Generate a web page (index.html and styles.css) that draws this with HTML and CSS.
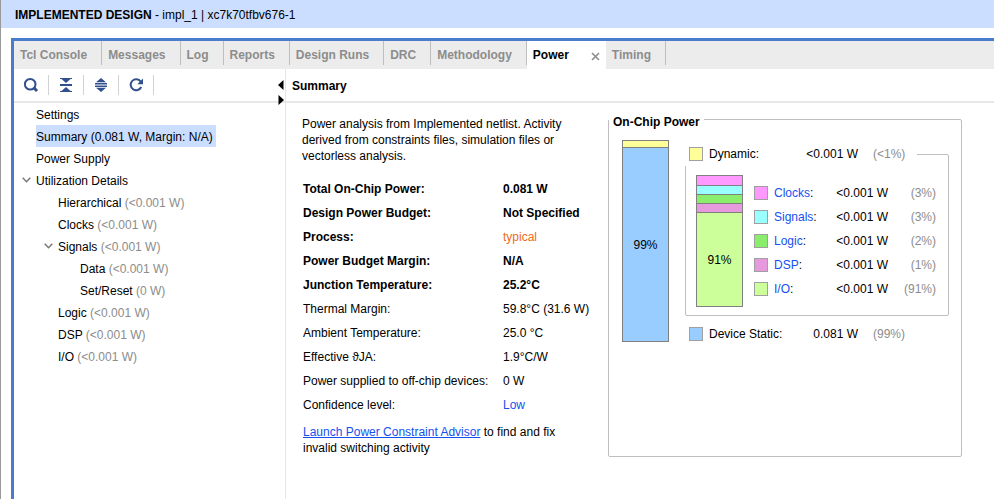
FILE: index.html
```html
<!DOCTYPE html>
<html lang="en">
<head>
<meta charset="utf-8">
<title>Implemented Design - Power</title>
<link rel="stylesheet" href="styles.css">
</head>
<body>
<header class="design-bar"><h1>IMPLEMENTED DESIGN</h1><span>&nbsp;- impl_1 | xc7k70tfbv676-1</span></header>
<div class="panel">
  <div class="tabs" role="tablist">
    <button class="tab" role="tab">Tcl Console</button>
    <button class="tab" role="tab">Messages</button>
    <button class="tab" role="tab">Log</button>
    <button class="tab" role="tab">Reports</button>
    <button class="tab" role="tab">Design Runs</button>
    <button class="tab" role="tab">DRC</button>
    <button class="tab" role="tab">Methodology</button>
    <div class="tab-active">
      <button class="tab-label" role="tab" aria-selected="true">Power</button>
      <button class="tab-close" aria-label="Close Power"><svg width="9" height="9" viewBox="0 0 9 9"><path d="M1 1l7 7M8 1l-7 7" stroke="#8c8c8c" stroke-width="1.6" fill="none"/></svg></button>
    </div>
    <button class="tab" role="tab">Timing</button>
  </div>
  <div class="workspace">
    <aside class="sidebar">
      <div class="toolbar">
        <button class="tool" aria-label="Search"><svg width="16" height="16" viewBox="0 0 16 16"><circle cx="7.200" cy="7.200" r="5.300" fill="none" stroke="#32508c" stroke-width="2"/><path d="M10.800 10.800l3.200 3.200" stroke="#32508c" stroke-width="3"/></svg></button>
        <button class="tool" aria-label="Collapse all"><svg width="16" height="16" viewBox="0 0 16 16" fill="#32508c"><path d="M2 1h12v1h-1.500L8 6 3.500 2H2zM2 7h12v2H2zM2 15h12v-1h-1.500L8 10l-4.500 4H2z"/></svg></button>
        <button class="tool" aria-label="Expand all"><svg width="16" height="16" viewBox="0 0 16 16" fill="#32508c"><path d="M8 1l5 4.300H3zM2 6h12v1.500H2zM2 8.500h12V10H2zM3 10.700h10L8 15z"/></svg></button>
        <button class="tool" aria-label="Refresh"><svg width="16" height="16" viewBox="0 0 16 16"><path d="M12.700 4.600A5.500 5.500 0 1 0 13.200 10" fill="none" stroke="#32508c" stroke-width="2"/><path d="M15 1.500V7.200H9.300z" fill="#32508c"/></svg></button>
        <div class="splitter">
          <button aria-label="Collapse left"><svg width="6" height="10" viewBox="0 0 6 10"><path d="M5.500 0v10L0 5z"/></svg></button>
          <button aria-label="Expand right"><svg width="6" height="10" viewBox="0 0 6 10"><path d="M0.500 0v10L6 5z"/></svg></button>
        </div>
      </div>
      <ul class="tree">
        <li><div class="node"><span>Settings</span></div></li>
        <li><div class="node"><span class="selected">Summary (0.081 W, Margin: N/A)</span></div></li>
        <li><div class="node"><span>Power Supply</span></div></li>
        <li><div class="node"><svg class="chevron" width="9" height="6" viewBox="0 0 9 6"><path d="M0.700 0.700L4.500 4.700L8.300 0.700"/></svg><span>Utilization Details</span></div>
          <ul>
            <li><div class="node"><span>Hierarchical <small>(&lt;0.001 W)</small></span></div></li>
            <li><div class="node"><span>Clocks <small>(&lt;0.001 W)</small></span></div></li>
            <li><div class="node"><svg class="chevron" width="9" height="6" viewBox="0 0 9 6"><path d="M0.700 0.700L4.500 4.700L8.300 0.700"/></svg><span>Signals <small>(&lt;0.001 W)</small></span></div>
              <ul>
                <li><div class="node"><span>Data <small>(&lt;0.001 W)</small></span></div></li>
                <li><div class="node"><span>Set/Reset <small>(0 W)</small></span></div></li>
              </ul>
            </li>
            <li><div class="node"><span>Logic <small>(&lt;0.001 W)</small></span></div></li>
            <li><div class="node"><span>DSP <small>(&lt;0.001 W)</small></span></div></li>
            <li><div class="node"><span>I/O <small>(&lt;0.001 W)</small></span></div></li>
          </ul>
        </li>
      </ul>
    </aside>
    <main class="main">
      <h2 class="main-title">Summary</h2>
      <div class="content">
        <section class="summary">
          <p>Power analysis from Implemented netlist. Activity derived from constraints files, simulation files or vectorless analysis.</p>
          <table class="facts">
            <tr class="strong"><th>Total On-Chip Power:</th><td>0.081 W</td></tr>
            <tr class="strong"><th>Design Power Budget:</th><td>Not Specified</td></tr>
            <tr class="strong"><th>Process:</th><td class="typical">typical</td></tr>
            <tr class="strong"><th>Power Budget Margin:</th><td>N/A</td></tr>
            <tr class="strong"><th>Junction Temperature:</th><td>25.2°C</td></tr>
            <tr><th>Thermal Margin:</th><td>59.8°C (31.6 W)</td></tr>
            <tr><th>Ambient Temperature:</th><td>25.0 °C</td></tr>
            <tr><th>Effective ϑJA:</th><td>1.9°C/W</td></tr>
            <tr><th>Power supplied to off-chip devices:</th><td>0 W</td></tr>
            <tr><th>Confidence level:</th><td><a href="#confidence">Low</a></td></tr>
          </table>
          <p class="advisor"><a href="#advisor">Launch Power Constraint Advisor</a> to find and fix invalid switching activity</p>
        </section>
        <fieldset class="chip">
          <legend>On-Chip Power</legend>
          <div class="chip-body">
            <div class="bar total"><div class="dynamic"></div><div class="static rest">99%</div></div>
            <div class="breakdown">
              <fieldset class="group">
                <legend class="row"><i class="swatch dynamic"></i><span class="name">Dynamic:</span><span class="value">&lt;0.001 W</span><span class="share">(&lt;1%)</span></legend>
                <div class="group-body">
                  <div class="bar parts"><div class="clocks"></div><div class="signals"></div><div class="logic"></div><div class="dsp"></div><div class="io rest">91%</div></div>
                  <table class="items">
                    <tr><td><i class="swatch clocks"></i></td><th><a href="#clocks">Clocks</a>:</th><td>&lt;0.001 W</td><td class="share">(3%)</td></tr>
                    <tr><td><i class="swatch signals"></i></td><th><a href="#signals">Signals</a>:</th><td>&lt;0.001 W</td><td class="share">(3%)</td></tr>
                    <tr><td><i class="swatch logic"></i></td><th><a href="#logic">Logic</a>:</th><td>&lt;0.001 W</td><td class="share">(2%)</td></tr>
                    <tr><td><i class="swatch dsp"></i></td><th><a href="#dsp">DSP</a>:</th><td>&lt;0.001 W</td><td class="share">(1%)</td></tr>
                    <tr><td><i class="swatch io"></i></td><th><a href="#io">I/O</a>:</th><td>&lt;0.001 W</td><td class="share">(91%)</td></tr>
                  </table>
                </div>
              </fieldset>
              <div class="row static-row"><i class="swatch static"></i><span class="name">Device Static:</span><span class="value">0.081 W</span><span class="share">(99%)</span></div>
            </div>
          </div>
        </fieldset>
      </div>
    </main>
  </div>
</div>
</body>
</html>
```
FILE: styles.css
```css
* { box-sizing: border-box; }

body {
  margin: 0;
  min-height: 100vh;
  display: flex;
  flex-direction: column;
  border-left: 1px solid #999;
  background: #fff;
  color: #000;
  font: 12px/16px "Liberation Sans", Arial, sans-serif;
}

h1, h2, p, ul { margin: 0; padding: 0; font-size: 12px; }
ul { list-style: none; }
button { border: 0; padding: 0; background: none; color: inherit; font: inherit; }
svg { display: block; }
a { color: #1450f0; text-decoration: none; }
fieldset { margin: 0; padding: 0; border: 1px solid #bebebe; border-radius: 2px; min-width: 0; }
legend { padding: 0; }
table { border-collapse: collapse; }
th, td { padding: 0; height: 24px; text-align: left; font-weight: normal; white-space: nowrap; }

.design-bar {
  display: flex;
  align-items: center;
  height: 28px;
  padding: 2px 14px 0;
  background: #ccdeff;
}

.panel {
  flex: 1;
  display: flex;
  flex-direction: column;
  margin: 10px 0 0 10px;
  border: solid #4a7ccd;
  border-width: 3px 0 0 3px;
}

/* Tabs */
.tabs { display: flex; height: 28px; background: #ececec; color: #8c8c8c; font-weight: bold; }
.tab { position: relative; padding: 0 15px 0 6px; white-space: nowrap; }
.tab::after {
  content: "";
  position: absolute;
  top: 0;
  right: 0;
  width: 1px;
  height: 24px;
  background: #bebebe;
}
.tab-active {
  display: flex;
  align-items: center;
  justify-content: space-between;
  width: 79px;
  padding: 0 6px;
  background: #fff;
  color: #000;
}
.tab-close { padding-top: 3px; }

.workspace { flex: 1; display: flex; }

/* Sidebar */
.sidebar { flex: none; width: 272px; border-right: 1px solid #e6e6e6; }
.toolbar {
  position: relative;
  display: flex;
  align-items: center;
  height: 34px;
  border-bottom: 2px solid #e8e8e8;
}
.tool {
  display: flex;
  align-items: center;
  justify-content: center;
  width: 35px;
  height: 20px;
  border-right: 1px solid #d2d2d2;
}
.splitter {
  position: absolute;
  top: 11px;
  right: 1px;
  display: flex;
  flex-direction: column;
  gap: 5px;
}

.tree { padding-left: 22px; }
.tree ul { padding-left: 22px; }
.node { position: relative; display: flex; height: 22px; line-height: 20px; white-space: nowrap; }
.node span { padding-top: 2px; }
.node small { font-size: 12px; color: #8c8c8c; }
.node .selected { padding-right: 3px; background: #ccdeff; }
.chevron { position: absolute; left: -14px; top: 8px; fill: none; stroke: #787878; stroke-width: 1.5; }

/* Main */
.main { flex: 1; min-width: 0; }
.main-title { height: 34px; padding-left: 6px; border-bottom: 2px solid #e8e8e8; line-height: 34px; }
.content { display: flex; align-items: flex-start; padding: 6px 8px 0 16px; }
.summary { flex: none; width: 306px; padding-top: 7px; }
.summary p { width: 276px; }
.facts { margin: 13px 0 7px 1px; }
.facts th { width: 200px; }
.strong th, .strong td { font-weight: bold; }
.facts .strong .typical { color: #f26a1b; font-weight: normal; }
.summary .advisor { padding-left: 1px; }
.advisor a { text-decoration: underline; }

/* On-chip power chart */
.chip { flex: none; width: 354px; min-height: 348px; }
.chip > legend { padding: 6px 4px 0; font-weight: bold; line-height: 14px; }
.chip-body { display: flex; gap: 16px; padding: 0 12px 0 13px; }
.bar { flex: none; display: flex; flex-direction: column; width: 47px; border: 1px solid #808080; }
.bar div + div { border-top: 1px solid #808080; }
.bar .rest { flex: 1; display: flex; align-items: center; justify-content: center; }
.total { height: 202px; margin-top: 11px; }
.total .dynamic { height: 6px; }
.parts { height: 132px; }
.parts div { height: 9px; }

.breakdown { flex: 1; padding-top: 13px; }
.row { display: flex; align-items: center; height: 24px; }
.group .row { width: 232px; margin-left: -1px; padding-left: 4px; background: #fff; }
.static-row { margin-top: 6px; padding-left: 4px; }
.swatch { display: block; width: 14px; height: 14px; border: 1px solid #a0a0a0; }
.name { width: 80px; margin-left: 6px; }
.value { width: 69px; text-align: right; }
.row .share { margin-left: 15px; }
.share { color: #8c8c8c; }
.group-body { display: flex; gap: 11px; padding: 9px 12px 8px 10px; }
.items { flex: 1; margin-top: 6px; align-self: flex-start; }
.items th { width: 62px; }
.items td:first-child { width: 20px; }
.items td + th + td { text-align: right; }
.items .share { width: 48px; text-align: right; }

.dynamic { background: #ffff99; }
.static { background: #99ccff; }
.clocks { background: #ff99ff; }
.signals { background: #99ffff; }
.logic { background: #8aee6c; }
.dsp { background: #e699dc; }
.io { background: #ccff99; }
```
